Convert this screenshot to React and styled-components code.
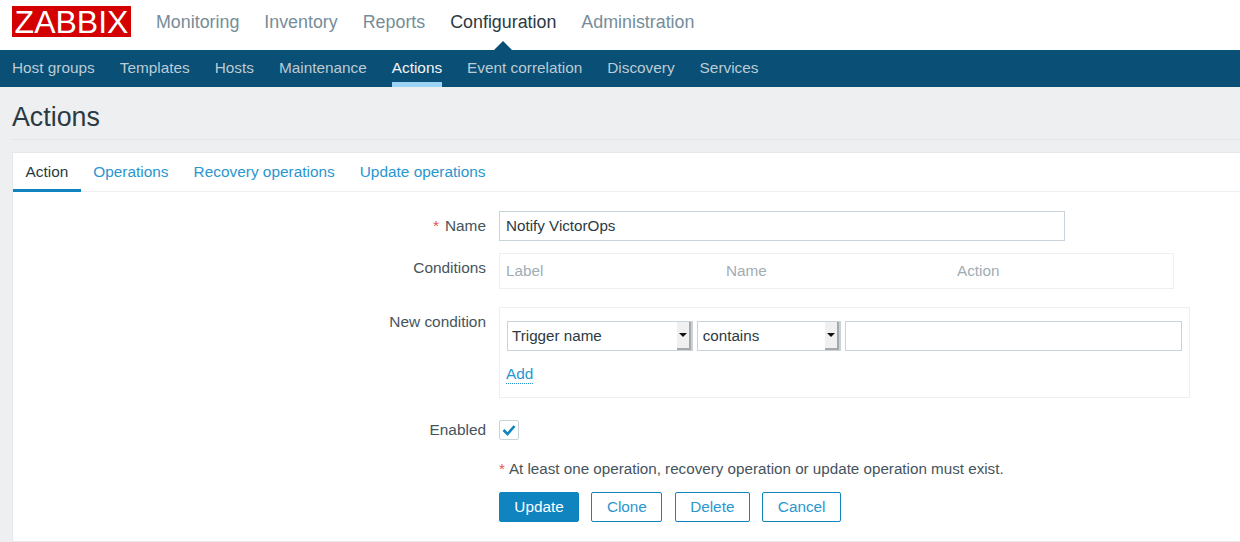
import styled, { createGlobalStyle } from "styled-components";

const mainItems = ["Monitoring", "Inventory", "Reports", "Configuration", "Administration"];
const subItems = ["Host groups", "Templates", "Hosts", "Maintenance", "Actions", "Event correlation", "Discovery", "Services"];
const tabs = ["Action", "Operations", "Recovery operations", "Update operations"];

const GlobalStyle = createGlobalStyle`
  html, body {
    margin: 0;
    padding: 0;
    background: #edeff1;
    font-family: "Liberation Sans", Arial, sans-serif;
    color: #2b3a42;
  }
  * { box-sizing: border-box; }
`;

const Page = styled.div`
  width: 1240px;
  height: 542px;
  overflow: hidden;
`;

const TopBar = styled.div`
  height: 50px;
  background: #fff;
  display: flex;
  align-items: flex-start;
  padding: 6px 0 0 12px;
`;

const Logo = styled.div`
  width: 119px;
  height: 31px;
  background: #d40000;
  color: #fff;
  font-size: 32px;
  line-height: 32px;
  text-align: center;
  margin-right: 25px;
`;

const MainNav = styled.div`
  display: flex;
  gap: 25px;
`;

const MainItem = styled.div`
  position: relative;
  height: 44px;
  font-size: 17.85px;
  line-height: 32px;
  color: ${(p) => (p.active ? "#2b3a42" : "#768d99")};
  &::after {
    content: "";
    display: ${(p) => (p.active ? "block" : "none")};
    position: absolute;
    left: 50%;
    bottom: 0;
    margin-left: -9px;
    border-left: 9px solid transparent;
    border-right: 9px solid transparent;
    border-bottom: 9px solid #0a4f75;
  }
`;

const SubNav = styled.div`
  height: 37px;
  background: #0a4f75;
  display: flex;
  gap: 25px;
  padding-left: 12px;
`;

const SubItem = styled.div`
  height: 37px;
  font-size: 15.35px;
  line-height: 36px;
  color: ${(p) => (p.active ? "#f2f6f8" : "#bccbd4")};
  border-bottom: ${(p) => (p.active ? "5px solid #9bd4f5" : "none")};
`;

const TitleBar = styled.div`
  margin-left: 12px;
  height: 53px;
  border-bottom: 1px solid #e3e6e8;
`;

const Title = styled.h1`
  margin: 0;
  font-size: 26.8px;
  font-weight: 400;
  line-height: 60px;
  color: #2b3a42;
`;

const Card = styled.div`
  margin: 12px 0 0 12px;
  height: 390px;
  background: #fff;
  border: 1px solid #e6e9eb;
  border-right: none;
`;

const TabBar = styled.div`
  height: 39px;
  display: flex;
  border-bottom: 1px solid #edeff1;
`;

const Tab = styled.div`
  height: 39px;
  padding: 0 12.5px;
  font-size: 15.4px;
  line-height: 37px;
  color: ${(p) => (p.active ? "#2b3a42" : "#2a96d0")};
  border-bottom: ${(p) => (p.active ? "3px solid #0f84bf" : "none")};
`;

const Form = styled.div`
  padding-top: 19px;
`;

const Row = styled.div`
  display: grid;
  grid-template-columns: 473px 1fr;
  column-gap: 13px;
  margin-bottom: ${(p) => p.gap || 0}px;
`;

const Label = styled.div`
  text-align: right;
  font-size: 15.4px;
  line-height: 20px;
  color: #46545c;
  padding-top: ${(p) => p.top || 0}px;
`;

const Star = styled.span`
  color: #e8514e;
  margin-right: ${(p) => p.space || 0}px;
`;

const TextInput = styled.div`
  width: ${(p) => p.width}px;
  height: 30px;
  background: #fff;
  border: 1px solid #c9d4da;
  font-size: 15.2px;
  line-height: 28px;
  padding-left: 6px;
  color: #2b3a42;
`;

const TableBox = styled.div`
  width: 675px;
  height: 36px;
  border: 1px solid #edeff1;
  display: grid;
  grid-template-columns: 220px 231px 1fr;
  padding-left: 6px;
  font-size: 15.3px;
  line-height: 33px;
  color: #9fadb5;
`;

const ConditionBox = styled.div`
  width: 691px;
  height: 91px;
  border: 1px solid #edeff1;
  padding: 13px 7px;
`;

const ConditionRow = styled.div`
  display: flex;
  gap: 4px;
`;

const Select = styled.div`
  width: ${(p) => p.width}px;
  height: 30px;
  display: flex;
  justify-content: space-between;
  border: 1px solid #c9d4da;
  border-right-width: 2px;
  font-size: 15.2px;
  line-height: 28px;
  padding-left: ${(p) => p.pad}px;
  color: #2b3a42;
`;

const SelectArrow = styled.div`
  width: 14px;
  height: 28px;
  background: #f0f0f0;
  border-right: 2px solid #a8a8a8;
  border-bottom: 2px solid #a8a8a8;
  display: flex;
  align-items: center;
  justify-content: center;
  &::before {
    content: "";
    border-left: 4px solid transparent;
    border-right: 4px solid transparent;
    border-top: 4px solid #111;
  }
`;

const AddLink = styled.span`
  display: inline-block;
  margin-top: 14px;
  margin-left: -1px;
  font-size: 15.4px;
  line-height: 18px;
  color: #2a96d0;
  border-bottom: 1px dotted #2a96d0;
`;

const CheckBox = styled.div`
  width: 20px;
  height: 20px;
  border: 1px solid #c9d4da;
  border-radius: 2px;
  display: flex;
  align-items: center;
  justify-content: center;
`;

const Note = styled.div`
  font-size: 15.2px;
  line-height: 20px;
  color: #46545c;
`;

const Buttons = styled.div`
  display: flex;
  gap: 12.4px;
  margin-top: 13px;
`;

const Button = styled.div`
  width: ${(p) => p.width}px;
  height: 30px;
  border: 1px solid #0f84bf;
  border-radius: 2px;
  background: ${(p) => (p.primary ? "#0f84bf" : "#fff")};
  color: ${(p) => (p.primary ? "#fff" : "#2a96d0")};
  font-size: 15.3px;
  line-height: 28px;
  text-align: center;
`;

export default function App() {
  return (
    <Page>
      <GlobalStyle />
      <TopBar>
        <Logo>ZABBIX</Logo>
        <MainNav>
          {mainItems.map((item) => (
            <MainItem key={item} active={item === "Configuration"}>{item}</MainItem>
          ))}
        </MainNav>
      </TopBar>
      <SubNav>
        {subItems.map((item) => (
          <SubItem key={item} active={item === "Actions"}>{item}</SubItem>
        ))}
      </SubNav>
      <TitleBar>
        <Title>Actions</Title>
      </TitleBar>
      <Card>
        <TabBar>
          {tabs.map((tab) => (
            <Tab key={tab} active={tab === "Action"}>{tab}</Tab>
          ))}
        </TabBar>
        <Form>
          <Row gap={12}>
            <Label top={5}><Star space={6}>*</Star>Name</Label>
            <TextInput width={566}>Notify VictorOps</TextInput>
          </Row>
          <Row gap={18}>
            <Label top={5}>Conditions</Label>
            <TableBox>
              <span>Label</span>
              <span>Name</span>
              <span>Action</span>
            </TableBox>
          </Row>
          <Row gap={22}>
            <Label top={5}>New condition</Label>
            <ConditionBox>
              <ConditionRow>
                <Select width={186} pad={4}>Trigger name<SelectArrow /></Select>
                <Select width={144} pad={5}>contains<SelectArrow /></Select>
                <TextInput width={338} />
              </ConditionRow>
              <AddLink>Add</AddLink>
            </ConditionBox>
          </Row>
          <Row gap={19}>
            <Label>Enabled</Label>
            <CheckBox>
              <svg width="14" height="12" viewBox="0 0 14 12">
                <path d="M1.5 6 L5.5 10 L12.5 2" fill="none" stroke="#0f84bf" strokeWidth="2.6" />
              </svg>
            </CheckBox>
          </Row>
          <Row>
            <span />
            <div>
              <Note><Star space={4}>*</Star>At least one operation, recovery operation or update operation must exist.</Note>
              <Buttons>
                <Button primary width={80}>Update</Button>
                <Button width={71}>Clone</Button>
                <Button width={75}>Delete</Button>
                <Button width={79}>Cancel</Button>
              </Buttons>
            </div>
          </Row>
        </Form>
      </Card>
    </Page>
  );
}
